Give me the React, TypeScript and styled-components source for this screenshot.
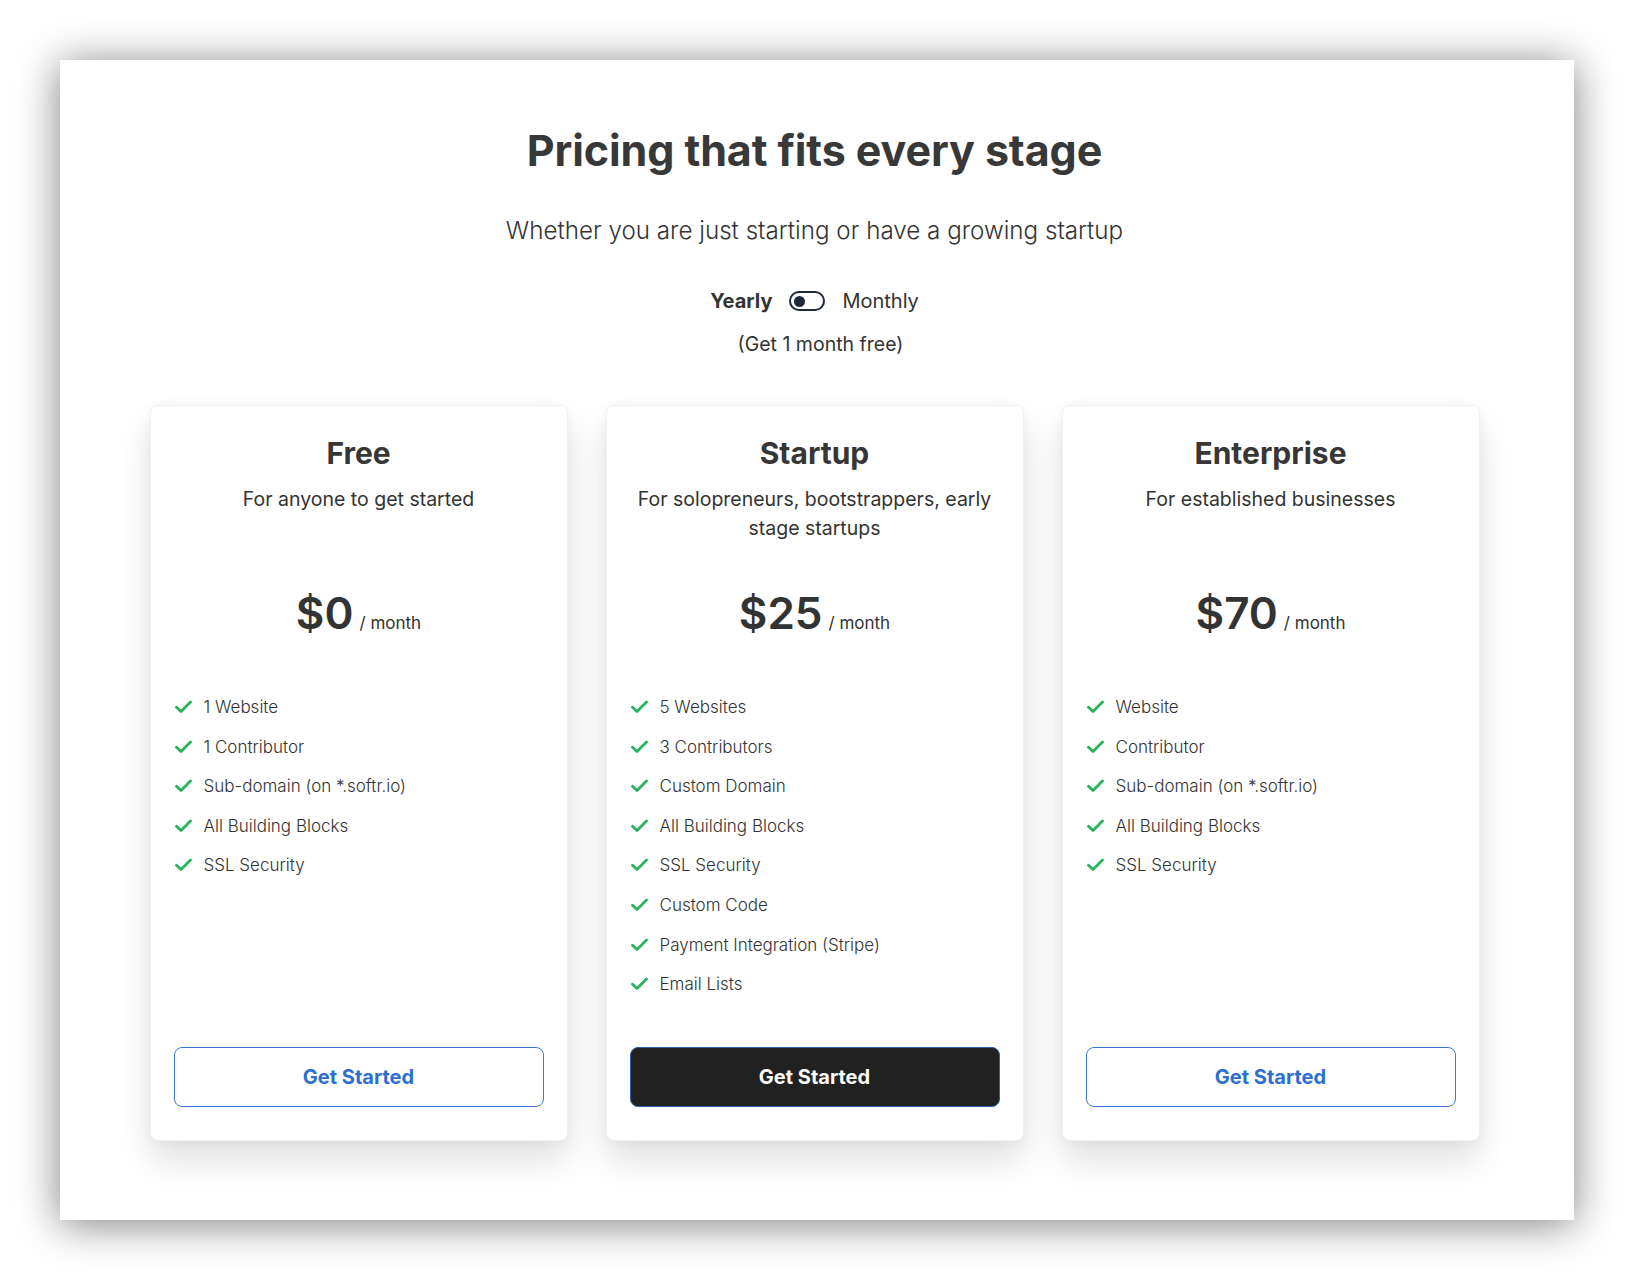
import styled, { createGlobalStyle } from 'styled-components';

interface IPlan {
  name: string;
  description: string;
  price: string;
  features: string[];
  highlighted?: boolean;
}

const plans: IPlan[] = [
  {
    name: 'Free',
    description: 'For anyone to get started',
    price: '$0',
    features: ['1 Website', '1 Contributor', 'Sub-domain (on *.softr.io)', 'All Building Blocks', 'SSL Security'],
  },
  {
    name: 'Startup',
    description: 'For solopreneurs, bootstrappers, early stage startups',
    price: '$25',
    features: [
      '5 Websites',
      '3 Contributors',
      'Custom Domain',
      'All Building Blocks',
      'SSL Security',
      'Custom Code',
      'Payment Integration (Stripe)',
      'Email Lists',
    ],
    highlighted: true,
  },
  {
    name: 'Enterprise',
    description: 'For established businesses',
    price: '$70',
    features: ['Website', 'Contributor', 'Sub-domain (on *.softr.io)', 'All Building Blocks', 'SSL Security'],
  },
];

const CheckIcon = () => (
  <svg width="17" height="14" viewBox="0 0 17 14" fill="none">
    <path d="M1.5 7.2 L6 11.5 L15.5 2" stroke="#27b35f" strokeWidth="2.8" strokeLinecap="round" strokeLinejoin="round" />
  </svg>
);

const PlanCard = ({ name, description, price, features, highlighted }: IPlan) => (
  <CardSt>
    <CardTitle>{name}</CardTitle>
    <CardDesc>{description}</CardDesc>
    <PriceRow>
      <Amount>{price}</Amount>
      <Period>/ month</Period>
    </PriceRow>
    <FeatureList>
      {features.map((f) => (
        <Feature key={f}>
          <CheckIcon />
          <span>{f}</span>
        </Feature>
      ))}
    </FeatureList>
    <CtaButton dark={!!highlighted}>Get Started</CtaButton>
  </CardSt>
);

export default function App() {
  return (
    <>
      <GlobalStyle />
      <Page>
        <Frame>
          <Heading>Pricing that fits every stage</Heading>
          <Subheading>Whether you are just starting or have a growing startup</Subheading>
          <ToggleRow>
            <ToggleLabel active>Yearly</ToggleLabel>
            <Switch>
              <Knob />
            </Switch>
            <ToggleLabel>Monthly</ToggleLabel>
          </ToggleRow>
          <FreeNote>(Get 1 month free)</FreeNote>
          <CardsGrid>
            {plans.map((p) => (
              <PlanCard key={p.name} {...p} />
            ))}
          </CardsGrid>
        </Frame>
      </Page>
    </>
  );
}

const GlobalStyle = createGlobalStyle`
  html, body {
    margin: 0;
    padding: 0;
    background: #ffffff;
  }
  body {
    font-family: Inter, "Noto Sans", sans-serif;
    color: #3a3a3a;
  }
`;

const Page = styled.div`
  width: 1634px;
  height: 1280px;
  padding: 60px;
  box-sizing: border-box;
`;

const Frame = styled.div`
  width: 100%;
  height: 100%;
  background: #fff;
  box-shadow: 0 4px 40px rgba(0, 0, 0, 0.5);
  display: flex;
  flex-direction: column;
  align-items: center;
  padding: 60px 5px 0 0;
  box-sizing: border-box;
`;

const Heading = styled.h1`
  margin: 0;
  font-size: 43px;
  line-height: 60px;
  font-weight: 700;
  color: #383838;
  letter-spacing: -0.1px;
`;

const Subheading = styled.p`
  margin: 35px 0 0;
  font-size: 24.2px;
  line-height: 32px;
  font-weight: 300;
  color: #333;
`;

const ToggleRow = styled.div`
  margin-top: 40px;
  display: flex;
  align-items: center;
  gap: 17px;
  height: 28px;
`;

const ToggleLabel = styled.span<{ active?: boolean }>`
  font-size: 20px;
  font-weight: ${({ active }) => (active ? 700 : 400)};
  color: #333;
`;

const Switch = styled.div`
  width: 36px;
  height: 20px;
  border: 2px solid #1d2838;
  border-radius: 12px;
  box-sizing: border-box;
  display: flex;
  align-items: center;
  padding-left: 3px;
`;

const Knob = styled.div`
  width: 11px;
  height: 11px;
  border-radius: 50%;
  background: #1d2838;
`;

const FreeNote = styled.p`
  margin: 15px 0 0 12px;
  font-size: 19.5px;
  line-height: 28px;
  color: #333;
`;

const CardsGrid = styled.div`
  margin-top: 47px;
  display: grid;
  grid-template-columns: repeat(3, 418px);
  gap: 38px;
`;

const CardSt = styled.div`
  height: 736px;
  box-sizing: border-box;
  background: #fff;
  border: 1px solid #f0f0f0;
  border-radius: 8px;
  box-shadow: 0 20px 36px rgba(0, 0, 0, 0.12), 0 2px 14px rgba(0, 0, 0, 0.04);
  padding: 29px 23px 33px;
  display: flex;
  flex-direction: column;
  align-items: center;
`;

const CardTitle = styled.h2`
  margin: 0;
  font-size: 30px;
  line-height: 36px;
  font-weight: 700;
  color: #363636;
`;

const CardDesc = styled.p`
  margin: 14px 0 0;
  min-height: 58px;
  font-size: 19.5px;
  line-height: 29px;
  text-align: center;
  color: #333;
  max-width: 372px;
`;

const PriceRow = styled.div`
  margin-top: 43px;
  display: flex;
  align-items: baseline;
  gap: 6px;
`;

const Amount = styled.span`
  font-size: 44px;
  line-height: 54px;
  font-weight: 600;
  color: #333;
`;

const Period = styled.span`
  font-size: 17px;
  color: #333;
`;

const FeatureList = styled.ul`
  list-style: none;
  margin: 55px 0 0;
  padding: 0 0 0 2px;
  width: 100%;
  flex: 1;
  display: flex;
  flex-direction: column;
  gap: 15.6px;
`;

const Feature = styled.li`
  display: flex;
  align-items: center;
  gap: 12px;
  font-size: 17px;
  line-height: 24px;
  font-weight: 300;
  color: #333;
`;

const CtaButton = styled.button<{ dark: boolean }>`
  width: 100%;
  height: 60px;
  border-radius: 8px;
  border: 1px solid ${({ dark }) => (dark ? '#3160a8' : '#3b78d4')};
  background: ${({ dark }) => (dark ? '#212121' : '#fff')};
  color: ${({ dark }) => (dark ? '#fff' : '#2c6fcf')};
  font-family: Inter, "Noto Sans", sans-serif;
  font-size: 20px;
  font-weight: 700;
  cursor: pointer;
`;
